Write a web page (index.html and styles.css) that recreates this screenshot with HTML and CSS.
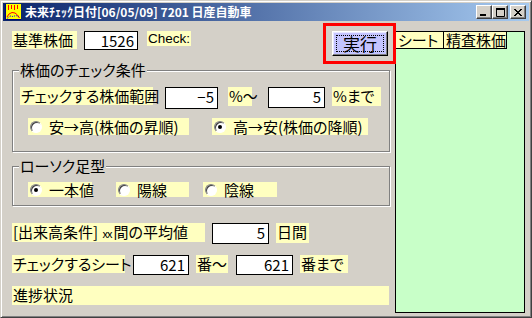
FILE: index.html
```html
<!DOCTYPE html>
<html lang="ja">
<head>
<meta charset="utf-8">
<title>未来チェック日付</title>
<link rel="stylesheet" href="styles.css">
</head>
<body>
<div class="window">
  <div class="titlebar">
    <svg class="appicon" width="16" height="16" viewBox="0 0 16 16">
      <rect x="0" y="0" width="16" height="16" fill="#ffff00"/>
      <path d="M0.5 0V16M0 15.5H16" stroke="#000080" fill="none"/>
      <path d="M3.5 1v5M6.5 1v4M9.5 1v5M12.5 1v4" stroke="#ff0000" fill="none"/>
      <path d="M2 13 L4 10 L7 8.5 L10 9 L12.5 11 L14.5 14" stroke="#ff0000" fill="none"/>
      <path d="M2 14.5 L5 12 L8 12.5 L11 11.5 L14 13" stroke="#0000ff" stroke-dasharray="1 1" fill="none"/>
    </svg>
    <span class="title">未来ﾁｪｯｸ日付[06/05/09] 7201 日産自動車</span>
    <div class="caption-btns">
      <span class="cbtn"><svg width="8" height="7" viewBox="0 0 8 7"><rect x="0" y="5" width="6" height="2" fill="#000"/></svg></span>
      <span class="cbtn"><svg width="9" height="9" viewBox="0 0 9 9"><path d="M0.5 0.5H8.5V8.5H0.5Z" fill="none" stroke="#000"/><rect x="0" y="0" width="9" height="2" fill="#000"/></svg></span>
      <span class="cbtn close"><svg width="8" height="7" viewBox="0 0 8 7"><path d="M0 0L7 7M1 0L8 7M7 0L0 7M8 0L1 7" stroke="#000" stroke-width="1"/></svg></span>
    </div>
  </div>
  <div class="client">
    <div class="left">
      <div class="row r1">
        <span class="lbl w65 h18">基準株価</span>
        <span class="field w54 h19 ml7">1526</span>
        <span class="lbl lat w44 h15 ml9">Check:</span>
        <button class="run"><span class="focus">実行</span></button>
      </div>

      <div class="group g1">
        <div class="legend">株価のチェック条件</div>
        <div class="row ra">
          <span class="lbl w133 h18 ml7">チェックする株価範囲</span>
          <span class="field w53 h22 ml12">−5</span>
          <span class="lbl w24 h19 ml10">%〜</span>
          <span class="field w57 h21 ml16">5</span>
          <span class="lbl w49 h19 ml7">%まで</span>
        </div>
        <div class="row rb">
          <span class="lbl radio-item w161 h17 ml15"><span class="radio"></span>安→高(株価の昇順)</span>
          <span class="lbl radio-item w156 h17 ml23"><span class="radio on"></span>高→安(株価の降順)</span>
        </div>
      </div>

      <div class="group g2">
        <div class="legend">ローソク足型</div>
        <div class="row rc">
          <span class="lbl radio-item w64 h15 ml15"><span class="radio on"></span>一本値</span>
          <span class="lbl radio-item w73 h15 ml24"><span class="radio"></span>陽線</span>
          <span class="lbl radio-item w74 h15 ml14"><span class="radio"></span>陰線</span>
        </div>
      </div>

      <div class="row r3">
        <span class="lbl w193 h19">[出来高条件] <span class="xx">xx</span>間の平均値</span>
        <span class="field w57 h21 ml7">5</span>
        <span class="lbl w33 h20 ml7">日間</span>
      </div>

      <div class="row r4">
        <span class="lbl w113 h18">チェックするシート</span>
        <span class="field w56 h20 ml8">621</span>
        <span class="lbl w32 h18 ml7">番〜</span>
        <span class="field w57 h20 ml8">621</span>
        <span class="lbl w48 h18 ml7">番まで</span>
      </div>

      <div class="row r5">
        <span class="lbl w377 h19">進捗状況</span>
      </div>
    </div>

    <div class="grid">
      <div class="ghead">
        <span class="gcell c1">シート</span>
        <span class="gcell c2">精査株価</span>
      </div>
    </div>
  </div>
</div>
</body>
</html>
```

FILE: styles.css
```css
* { box-sizing: border-box; }
html, body { margin: 0; padding: 0; }
body {
  width: 532px;
  height: 318px;
  overflow: hidden;
  background: #d4d0c8;
  font-family: "Noto Sans CJK JP", "Liberation Sans", sans-serif;
  color: #000;
}

.window {
  width: 532px;
  height: 318px;
  background: #d4d0c8;
  border: 1px solid;
  border-color: #d4d0c8 #404040 #404040 #d4d0c8;
  box-shadow: inset 1px 1px 0 #fff, inset -1px -1px 0 #808080;
  padding: 2px;
  display: flex;
  flex-direction: column;
}

.titlebar {
  height: 18px;
  flex: none;
  display: flex;
  align-items: center;
  background: linear-gradient(to right, #0a246a, #a6caf0);
  padding-left: 2px;
}
.appicon { flex: none; display: block; }
.title {
  margin-left: 4px;
  color: #fff;
  font-weight: bold;
  font-size: 12px;
  line-height: 18px;
  white-space: nowrap;
}
.caption-btns {
  margin-left: auto;
  margin-right: 3px;
  display: flex;
  align-items: center;
}
.cbtn {
  width: 16px;
  height: 14px;
  background: #d4d0c8;
  border: 1px solid;
  border-color: #fff #404040 #404040 #fff;
  box-shadow: inset -1px -1px 0 #808080;
  display: flex;
  align-items: center;
  justify-content: center;
}
.cbtn svg { display: block; }
.cbtn.close { margin-left: 2px; }

.client {
  flex: 1;
  display: flex;
  padding: 10px 4px 0 9px;
}

.left {
  width: 378px;
  flex: none;
  display: flex;
  flex-direction: column;
}

.row { display: flex; align-items: flex-start; }

.lbl {
  display: block;
  flex: none;
  background: #ffffc0;
  font-size: 15px;
  line-height: 18px;
  padding-left: 1px;
  white-space: nowrap;
  overflow: visible;
  font-feature-settings: "palt";
}
.lbl.lat {
  font-family: "Liberation Sans", sans-serif;
  font-size: 13.5px;
  line-height: 15px;
}
.xx { font-size: 11px; letter-spacing: -1px; margin: 0 2px 0 1px; }

.field {
  display: block;
  flex: none;
  background: #fff;
  border: 1px solid #000;
  text-align: right;
  padding-right: 3px;
  font-size: 15px;
  line-height: 18px;
  font-family: "Noto Sans CJK JP", "Liberation Sans", sans-serif;
}

.run {
  position: relative;
  margin-left: auto;
  margin-right: 2px;
  width: 56px;
  height: 25px;
  padding: 3px;
  background: #c4c4ff;
  border: 1px solid;
  border-color: #fff #000 #000 #fff;
  box-shadow: inset -1px -1px 0 #808080, inset 1px 1px 0 #e8e8ff;
  font-family: "Noto Sans CJK JP", sans-serif;
  font-size: 17px;
  color: #000;
}
.run .focus {
  display: flex;
  align-items: center;
  justify-content: center;
  width: 100%;
  height: 100%;
  border: 1px dotted #000;
  line-height: 1;
}
.run::after {
  content: "";
  position: absolute;
  left: -10px;
  top: -9px;
  right: -9px;
  bottom: -9px;
  border: 3px solid #ff0000;
}

.group {
  flex: none;
  width: 378px;
  border: 1px solid #808080;
  box-shadow: inset 1px 1px 0 #fff, 1px 1px 0 #fff;
}
.g1 { margin-top: 14px; height: 82px; }
.g2 { margin-top: 14px; height: 40px; }
.legend {
  display: table;
  margin: -9px 0 0 6px;
  padding: 0 1px;
  background: #d4d0c8;
  font-size: 15px;
  line-height: 16px;
  font-feature-settings: "palt";
}
.ra { margin-top: 9px; }
.rb { margin-top: 9px; }
.rc { margin-top: 8px; }
.r3 { margin-top: 17px; }
.r4 { margin-top: 11px; }
.r5 { margin-top: 11px; }

.radio-item {
  display: flex;
  align-items: center;
  padding-left: 2px;
  line-height: 15px;
}
.radio {
  flex: none;
  width: 12px;
  height: 12px;
  margin-right: 7px;
  border-radius: 50%;
  background: #fff;
  border: 1px solid;
  border-color: #808080 #fff #fff #808080;
  box-shadow: inset 1px 1px 0 #404040;
  display: flex;
  align-items: center;
  justify-content: center;
}
.radio.on::after {
  content: "";
  width: 4px;
  height: 4px;
  border-radius: 50%;
  background: #000;
}

.grid {
  flex: none;
  width: 130px;
  height: 282px;
  margin-left: 5px;
  background: #c8ffc8;
  border: 1px solid #000;
}
.ghead { display: flex; }
.gcell {
  display: block;
  height: 17px;
  background: #ffffc0;
  border-right: 1px solid #000;
  border-bottom: 1px solid #000;
  font-size: 15px;
  line-height: 16px;
  padding-left: 2px;
  white-space: nowrap;
  font-feature-settings: "palt";
}
.c1 { width: 48px; }
.c2 { width: 63px; }

.w65 { width: 65px; } .w54 { width: 54px; } .w44 { width: 44px; }
.w133 { width: 133px; } .w53 { width: 53px; } .w24 { width: 24px; }
.w57 { width: 57px; } .w49 { width: 49px; } .w161 { width: 161px; }
.w156 { width: 156px; } .w64 { width: 64px; } .w73 { width: 73px; }
.w74 { width: 74px; } .w193 { width: 193px; } .w33 { width: 33px; }
.w113 { width: 113px; } .w56 { width: 56px; } .w32 { width: 32px; }
.w48 { width: 48px; } .w377 { width: 377px; }
.h15 { height: 15px; } .h17 { height: 17px; } .h18 { height: 18px; }
.h19 { height: 19px; } .h20 { height: 20px; } .h21 { height: 21px; }
.h22 { height: 22px; }
.ml7 { margin-left: 7px; } .ml8 { margin-left: 8px; } .ml9 { margin-left: 9px; }
.ml10 { margin-left: 10px; } .ml12 { margin-left: 12px; } .ml14 { margin-left: 14px; }
.ml15 { margin-left: 15px; } .ml16 { margin-left: 16px; } .ml23 { margin-left: 23px; }
.ml24 { margin-left: 24px; }
```
